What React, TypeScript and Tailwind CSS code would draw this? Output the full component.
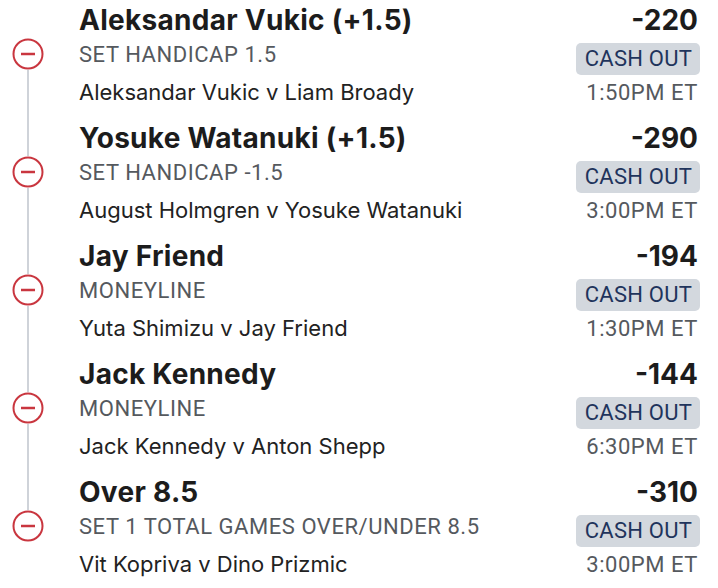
import React from 'react';

interface Leg {
  selection: string;
  market: string;
  matchup: string;
  odds: string;
  time: string;
}

const legs: Leg[] = [
  {
    selection: 'Aleksandar Vukic (+1.5)',
    market: 'SET HANDICAP 1.5',
    matchup: 'Aleksandar Vukic v Liam Broady',
    odds: '-220',
    time: '1:50PM ET'
  },
  {
    selection: 'Yosuke Watanuki (+1.5)',
    market: 'SET HANDICAP -1.5',
    matchup: 'August Holmgren v Yosuke Watanuki',
    odds: '-290',
    time: '3:00PM ET'
  },
  {
    selection: 'Jay Friend',
    market: 'MONEYLINE',
    matchup: 'Yuta Shimizu v Jay Friend',
    odds: '-194',
    time: '1:30PM ET'
  },
  {
    selection: 'Jack Kennedy',
    market: 'MONEYLINE',
    matchup: 'Jack Kennedy v Anton Shepp',
    odds: '-144',
    time: '6:30PM ET'
  },
  {
    selection: 'Over 8.5',
    market: 'SET 1 TOTAL GAMES OVER/UNDER 8.5',
    matchup: 'Vit Kopriva v Dino Prizmic',
    odds: '-310',
    time: '3:00PM ET'
  }
];

const RemoveIcon = () => (
  <svg width="32" height="32" viewBox="0 0 32 32" className="shrink-0">
    <circle cx="16" cy="16" r="14.5" fill="white" stroke="#c9363f" strokeWidth="2" />
    <line x1="9" y1="16" x2="23" y2="16" stroke="#c9363f" strokeWidth="2.5" />
  </svg>
);

const LegRow = ({ leg, first, last }: { leg: Leg; first: boolean; last: boolean }) => {
  return (
    <div className="flex h-[118px]">
      {/* timeline rail */}
      <div className="w-[79px] flex flex-col items-center pr-[24px] shrink-0">
        <div className={`w-[2px] h-[38px] ${first ? '' : 'bg-[#cfd3d9]'}`} />
        <RemoveIcon />
        <div className={`w-[2px] flex-1 ${last ? '' : 'bg-[#cfd3d9]'}`} />
      </div>
      <div className="flex-1 flex flex-col font-['Inter',sans-serif]">
        <div className="text-[28px] leading-[38px] pt-[1px] font-bold tracking-[0.01em] text-[#1c1c1c]">
          {leg.selection}
        </div>
        <div className="text-[22px] leading-[31px] tracking-[0.025em] text-[#55595e] font-['Roboto',sans-serif]">
          {leg.market}
        </div>
        <div className="text-[22px] leading-[40px] text-[#222] mt-[2px]">{leg.matchup}</div>
      </div>
      <div className="flex flex-col items-end pr-[20px] shrink-0">
        <div className="text-[28px] leading-[38px] pt-[1px] font-bold text-[#1c1c1c] font-['Inter',sans-serif]">
          {leg.odds}
        </div>
        <div className="h-[32px] pl-[9px] pr-[8px] mt-[4px] -mr-[2px] rounded-[5px] bg-[#d3d8de] text-[#1f345c] text-[22px] leading-[32px] tracking-[0.01em] font-['Roboto',sans-serif]">
          CASH OUT
        </div>
        <div className="text-[22px] leading-[34px] mt-[1px] tracking-[0.025em] text-[#55595e] font-['Roboto',sans-serif]">
          {leg.time}
        </div>
      </div>
    </div>
  );
};

export default function App() {
  return (
    <div className="w-[718px] h-[588px] bg-white overflow-hidden">
      {legs.map((leg, i) => (
        <LegRow key={i} leg={leg} first={i === 0} last={i === legs.length - 1} />
      ))}
    </div>
  );
}
